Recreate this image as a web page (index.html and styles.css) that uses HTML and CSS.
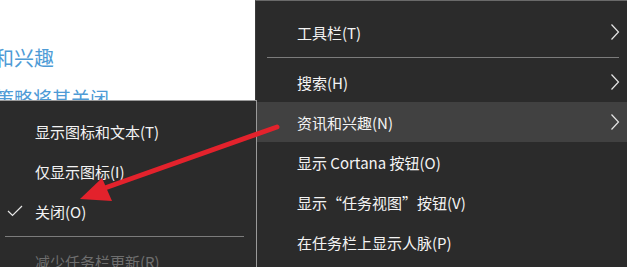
FILE: index.html
```html
<!DOCTYPE html>
<html lang="zh-CN">
<head>
<meta charset="utf-8">
<title>任务栏菜单</title>
<link rel="stylesheet" href="styles.css">
</head>
<body>
<div class="page">
  <div class="article">
    <p class="line">资讯和兴趣</p>
    <p class="line">组策略将其关闭</p>
  </div>

  <div class="menu main-menu">
    <div class="item"><span class="label">工具栏(T)</span><svg class="chev" width="10" height="16" viewBox="0 0 10 16"><polyline points="1.5,0.5 8.5,8 1.5,15.5" fill="none" stroke="#e6e6e6" stroke-width="1.2"/></svg></div>
    <div class="sep"><div class="sep-line"></div></div>
    <div class="item"><span class="label">搜索(H)</span><svg class="chev" width="10" height="16" viewBox="0 0 10 16"><polyline points="1.5,0.5 8.5,8 1.5,15.5" fill="none" stroke="#e6e6e6" stroke-width="1.2"/></svg></div>
    <div class="item active"><span class="label">资讯和兴趣(N)</span><svg class="chev" width="10" height="16" viewBox="0 0 10 16"><polyline points="1.5,0.5 8.5,8 1.5,15.5" fill="none" stroke="#e6e6e6" stroke-width="1.2"/></svg></div>
    <div class="item"><span class="label">显示 Cortana 按钮(O)</span></div>
    <div class="item"><span class="label">显示“任务视图”按钮(V)</span></div>
    <div class="item"><span class="label">在任务栏上显示人脉(P)</span></div>
  </div>

  <div class="menu sub-menu">
    <div class="item"><span class="check"></span><span class="label">显示图标和文本(T)</span></div>
    <div class="item"><span class="check"></span><span class="label">仅显示图标(I)</span></div>
    <div class="item"><span class="check"><svg width="16" height="12" viewBox="0 0 16 12"><polyline points="1,6 5.5,10.5 15,1" fill="none" stroke="#e8e8e8" stroke-width="1.2"/></svg></span><span class="label">关闭(O)</span></div>
    <div class="sep sub-sep"><div class="sep-line"></div></div>
    <div class="item disabled"><span class="check"></span><span class="label">减少任务栏更新(R)</span></div>
  </div>

  <svg class="annot" width="627" height="267" viewBox="0 0 627 267">
    <line x1="277" y1="127" x2="102" y2="189" stroke="#e3222c" stroke-width="5" stroke-linecap="round"/>
    <polygon points="80,199 102,178 112,201" fill="#e3222c"/>
  </svg>
</div>
</body>
</html>
```

FILE: styles.css
```css
* { box-sizing: border-box; }
html, body { margin: 0; padding: 0; }
body {
  width: 627px;
  height: 267px;
  overflow: hidden;
  background: #ffffff;
  font-family: "Noto Sans CJK SC", "Noto Sans", sans-serif;
}
.page {
  position: relative;
  width: 627px;
  height: 267px;
  overflow: hidden;
}
.article {
  padding-top: 38px;
  margin-left: -46px;
  color: #4e9bd6;
  font-size: 20px;
}
.line {
  margin: 0;
  line-height: 40px;
  white-space: nowrap;
}
.line + .line { margin-left: 22px; font-size: 19px; }

.menu {
  position: absolute;
  background: #2b2b2b;
  color: #f4f4f4;
  font-size: 15px;
}
.main-menu {
  left: 255px;
  top: 0;
  width: 372px;
  height: 267px;
  border-top: 1px solid #6a6a6a;
  border-left: 1px solid #3c3c3c;
  padding-top: 11px;
}
.sub-menu {
  left: 0;
  top: 100px;
  width: 257px;
  height: 167px;
  border-top: 1px solid #9a9a9a;
  border-right: 1px solid #9a9a9a;
  padding-top: 10px;
}
.item {
  height: 40px;
  display: flex;
  align-items: center;
  white-space: nowrap;
}
.main-menu .item { padding-left: 41px; padding-right: 7px; }
.main-menu .item .label { flex: 1; }
.main-menu .item.active { background: #414141; }
.chev { display: block; }
.check {
  width: 35px;
  flex: none;
  display: flex;
  justify-content: flex-start;
  padding-left: 7px;
}
.check svg { display: block; }
.disabled { color: #6e6e6e; }
.sep {
  height: 10px;
  display: flex;
  align-items: center;
  padding-left: 11px;
  padding-right: 8px;
}
.sep-line {
  flex: 1;
  height: 1px;
  background: #7c7c7c;
}
.sub-sep { padding-left: 5px; padding-right: 12px; }
.annot {
  position: absolute;
  left: 0;
  top: 0;
  pointer-events: none;
}
```
